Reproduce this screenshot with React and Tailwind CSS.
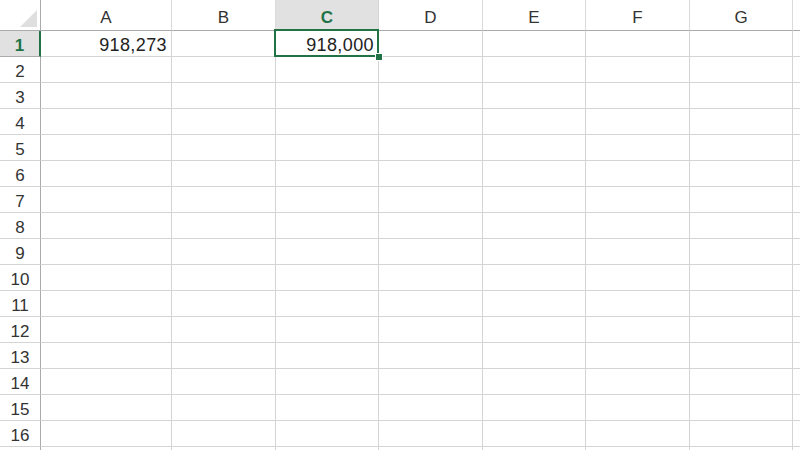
import React from 'react';

const cols = [
  { name: 'A', w: 'w-[131px]' },
  { name: 'B', w: 'w-[104px]' },
  { name: 'C', w: 'w-[103px]' },
  { name: 'D', w: 'w-[104px]' },
  { name: 'E', w: 'w-[103px]' },
  { name: 'F', w: 'w-[104px]' },
  { name: 'G', w: 'w-[103px]' },
  { name: '', w: 'w-[104px]' },
];

const data = { 'A1': '918,273', 'C1': '918,000' };
const rows = Array.from({ length: 17 }, (_, i) => i + 1);

const Corner = () => (
  <div className="w-[41px] h-[31px] shrink-0 border-r border-b border-r-[#ababab] border-b-[#ababab] bg-white flex items-end justify-end pr-[3px] pb-[3px]">
    <svg width="17" height="17" viewBox="0 0 17 17">
      <polygon points="17,0 17,17 0,17" fill="#dfdfdf" />
    </svg>
  </div>
);

const App = () => {
  return (
    <div className="w-[800px] h-[450px] overflow-hidden bg-white font-['Liberation_Sans',sans-serif] text-[#262626]">
      <div className="flex h-[31px]">
        <Corner />
        {cols.map((c, i) =>
          c.name === 'C' ? (
            <div key={i} className={`${c.w} shrink-0 h-[31px] bg-[#e1e1e1] border-r border-r-[#d4d4d4] border-b-2 border-b-[#217346] flex items-center justify-center text-[17px] font-bold text-[#217346] pt-[6px]`}>
              {c.name}
            </div>
          ) : (
            <div key={i} className={`${c.w} shrink-0 h-[31px] border-r border-r-[#dadada] border-b border-b-[#ababab] flex items-center justify-center text-[17px] text-[#333] pt-[6px]`}>
              {c.name}
            </div>
          )
        )}
      </div>
      {rows.map((r) => (
        <div key={r} className="flex h-[26px]">
          {r === 1 ? (
            <div className="w-[41px] shrink-0 h-[26px] bg-[#e1e1e1] border-r-2 border-r-[#217346] border-b border-b-[#ababab] flex items-center justify-center text-[17px] font-bold text-[#217346] pt-[5px]">
              {r}
            </div>
          ) : (
            <div className="w-[41px] shrink-0 h-[26px] border-r border-r-[#ababab] border-b border-b-[#d4d4d4] flex items-center justify-center text-[17px] text-[#333] pt-[5px]">
              {r < 17 ? r : ''}
            </div>
          )}
          {cols.map((c, i) => {
            const key = c.name + r;
            const selected = key === 'C1';
            return (
              <div key={i} className={`${c.w} shrink-0 h-[26px] border-r border-b border-[#d4d4d4] relative flex items-center justify-end pr-[4px] pt-[4px] text-[18px] tracking-[0.4px] text-[#222]`}>
                {data[key]}
                {selected && (
                  <>
                    <div className="absolute z-10 left-[-2px] top-[-2px] w-[105px] h-[28px] border-2 border-[#217346]" />
                    <div className="absolute z-20 right-[-5px] bottom-[-5px] w-[8px] h-[8px] bg-[#217346] border border-white" />
                  </>
                )}
              </div>
            );
          })}
        </div>
      ))}
    </div>
  );
};

export default App;
